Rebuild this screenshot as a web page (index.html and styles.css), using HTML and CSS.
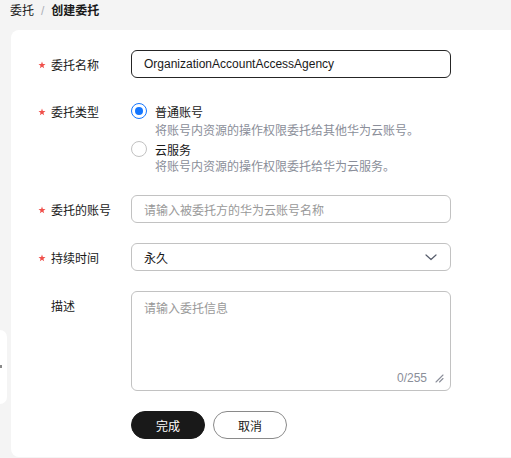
FILE: index.html
```html
<!DOCTYPE html>
<html lang="zh-CN">
<head>
<meta charset="utf-8">
<title>创建委托</title>
<link rel="stylesheet" href="styles.css">
</head>
<body>
<div class="side-handle"><span class="handle-dot"></span></div>
<nav class="breadcrumb">
  <span class="crumb">委托</span>
  <span class="sep">/</span>
  <span class="crumb current">创建委托</span>
</nav>
<main class="card">
  <div class="form">
    <div class="row row-name">
      <label class="label"><span class="req"><svg viewBox="0 0 10 10" width="8" height="8"><path d="M5 0.6 L6.1 3.7 L9.4 3.8 L6.8 5.8 L7.7 9 L5 7.1 L2.3 9 L3.2 5.8 L0.6 3.8 L3.9 3.7 Z" fill="#f0504b"/></svg></span>委托名称</label>
      <div class="control">
        <div class="input focused">OrganizationAccountAccessAgency</div>
      </div>
    </div>

    <div class="row row-type">
      <label class="label label-top"><span class="req"><svg viewBox="0 0 10 10" width="8" height="8"><path d="M5 0.6 L6.1 3.7 L9.4 3.8 L6.8 5.8 L7.7 9 L5 7.1 L2.3 9 L3.2 5.8 L0.6 3.8 L3.9 3.7 Z" fill="#f0504b"/></svg></span>委托类型</label>
      <div class="control radios">
        <div class="radio-option">
          <div class="radio-line"><span class="radio checked"></span><span class="radio-text">普通账号</span></div>
          <div class="radio-desc first">将账号内资源的操作权限委托给其他华为云账号。</div>
        </div>
        <div class="radio-option">
          <div class="radio-line"><span class="radio"></span><span class="radio-text">云服务</span></div>
          <div class="radio-desc">将账号内资源的操作权限委托给华为云服务。</div>
        </div>
      </div>
    </div>

    <div class="row row-account">
      <label class="label"><span class="req"><svg viewBox="0 0 10 10" width="8" height="8"><path d="M5 0.6 L6.1 3.7 L9.4 3.8 L6.8 5.8 L7.7 9 L5 7.1 L2.3 9 L3.2 5.8 L0.6 3.8 L3.9 3.7 Z" fill="#f0504b"/></svg></span>委托的账号</label>
      <div class="control">
        <div class="input placeholder">请输入被委托方的华为云账号名称</div>
      </div>
    </div>

    <div class="row row-duration">
      <label class="label"><span class="req"><svg viewBox="0 0 10 10" width="8" height="8"><path d="M5 0.6 L6.1 3.7 L9.4 3.8 L6.8 5.8 L7.7 9 L5 7.1 L2.3 9 L3.2 5.8 L0.6 3.8 L3.9 3.7 Z" fill="#f0504b"/></svg></span>持续时间</label>
      <div class="control">
        <div class="input select">
          <span>永久</span>
          <svg class="chevron" width="12" height="7" viewBox="0 0 12 7"><path d="M1 1 L6 5.5 L11 1" fill="none" stroke="#575d6c" stroke-width="1.2" stroke-linecap="round" stroke-linejoin="round"/></svg>
        </div>
      </div>
    </div>

    <div class="row row-desc">
      <label class="label label-plain">描述</label>
      <div class="control">
        <div class="textarea">
          <span class="placeholder-text">请输入委托信息</span>
          <div class="textarea-foot">
            <span class="counter">0/255</span>
            <svg class="resize" width="9" height="9" viewBox="0 0 9 9"><path d="M1 8 L8 1 M4.5 8 L8 4.5" fill="none" stroke="#8a8e99" stroke-width="1.1" stroke-linecap="round"/></svg>
          </div>
        </div>
      </div>
    </div>

    <div class="row row-actions">
      <div class="label-space"></div>
      <div class="actions">
        <button class="btn btn-primary">完成</button>
        <button class="btn btn-default">取消</button>
      </div>
    </div>
  </div>
</main>
</body>
</html>
```

FILE: styles.css
```css
html, body {
  margin: 0;
  padding: 0;
}
body {
  background: #f4f4f4;
  font-family: "Liberation Sans", "Noto Sans CJK SC", sans-serif;
  font-size: 12px;
  color: #191919;
  width: 511px;
  height: 458px;
  overflow: hidden;
  position: relative;
}
.breadcrumb {
  height: 30px;
  box-sizing: border-box;
  padding: 3px 0 0 10px;
  line-height: 16px;
  display: flex;
  gap: 7px;
}
.crumb { color: #191919; }
.crumb.current { font-weight: bold; }
.sep { color: #adb0b8; }

.card {
  background: #fff;
  margin-left: 11px;
  width: 520px;
  height: 427px;
  border-radius: 8px;
  box-sizing: border-box;
  padding: 20px 0 0 27px;
}
.form {
  display: flex;
  flex-direction: column;
}
.row {
  display: flex;
  align-items: flex-start;
}
.label, .label-space {
  width: 93px;
  flex: none;
  display: flex;
  align-items: center;
  height: 28px;
  color: #191919;
}
.label-plain { padding-left: 13px; box-sizing: border-box; }
.label-top { height: 18px; }
.req {
  width: 13px;
  display: flex;
  align-items: center;
  padding-top: 1px;
}
.req svg { display: block; }
.control { width: 320px; }

.input {
  height: 28px;
  box-sizing: border-box;
  border: 1px solid #c2c2c2;
  border-radius: 6px;
  padding: 0 12px;
  display: flex;
  align-items: center;
  color: #191919;
}
.input.focused { border-color: #252525; }
.input.placeholder { color: #999; }
.input.select { justify-content: space-between; padding-right: 13px; }
.chevron { display: block; }

.row-type { margin-top: 24px; }
.row-account { margin-top: 19px; }
.row-duration { margin-top: 20px; }
.row-desc { margin-top: 20px; }
.row-actions { margin-top: 20px; }

.radio-line {
  display: flex;
  align-items: center;
  height: 18px;
}
.radio {
  width: 16px;
  height: 16px;
  box-sizing: border-box;
  border: 1px solid #c2c2c2;
  border-radius: 50%;
  margin-right: 8px;
  position: relative;
}
.radio.checked { border-color: #1476ff; }
.radio.checked::after {
  content: "";
  position: absolute;
  left: 3px;
  top: 3px;
  width: 8px;
  height: 8px;
  border-radius: 50%;
  background: #1476ff;
}
.radio-desc {
  padding-left: 24px;
  line-height: 18px;
  color: #8a8e99;
}
.radio-desc.first { margin-top: 2px; }

.textarea {
  height: 100px;
  box-sizing: border-box;
  border: 1px solid #c2c2c2;
  border-radius: 6px;
  padding: 8px 6px 3px 12px;
  display: flex;
  flex-direction: column;
  justify-content: space-between;
}
.placeholder-text { color: #999; line-height: 18px; }
.textarea-foot {
  display: flex;
  justify-content: flex-end;
  align-items: center;
  gap: 8px;
  height: 18px;
}
.counter { color: #8a8e99; font-size: 12px; }
.resize { display: block; }

.actions { display: flex; gap: 8px; }
.btn {
  width: 74px;
  height: 28px;
  border-radius: 14px;
  font-family: inherit;
  font-size: 12px;
  box-sizing: border-box;
  cursor: pointer;
}
.btn-primary {
  background: #191919;
  color: #fff;
  border: 1px solid #191919;
}
.btn-default {
  background: #fff;
  color: #191919;
  border: 1px solid #8a8a8a;
}

.side-handle {
  position: absolute;
  left: 0;
  top: 330px;
  width: 7px;
  height: 74px;
  background: #fff;
  border-radius: 0 8px 8px 0;
}
.handle-dot {
  position: absolute;
  left: 0;
  top: 35px;
  width: 2px;
  height: 3px;
  background: #8a8a8a;
}
```
